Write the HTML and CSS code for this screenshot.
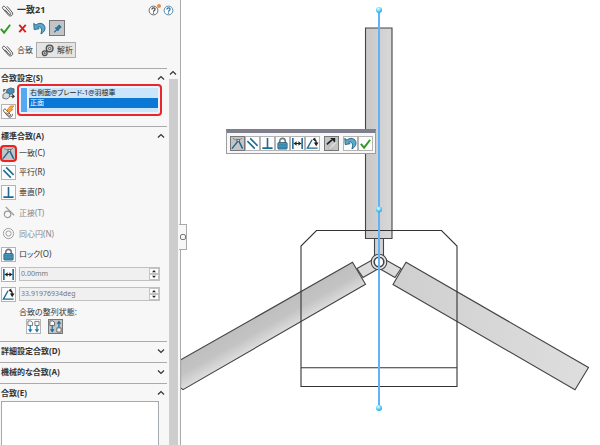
FILE: index.html
```html
<!DOCTYPE html>
<html lang="ja">
<head>
<meta charset="utf-8">
<title>一致21</title>
<link rel="stylesheet" href="styles.css">
</head>
<body>
<svg class="defs" aria-hidden="true">
  <defs>
    <symbol id="clip" viewBox="0 0 14 14"><path d="M4.500 6.500l4.200 4.600c1 1 2.400-.2 1.500-1.300L4.300 3C2.800 1.400.6 3.300 2 5l6 7c2.300 2.500 6-.6 4-3.200L6.800 2.800" fill="none" stroke="#4a4a4a" stroke-width="1" stroke-linecap="round"/></symbol>
    <symbol id="check" viewBox="0 0 14 14"><path d="M2 7.500l3.500 4L12 3" fill="none" stroke="#2c9a1c" stroke-width="2"/></symbol>
    <symbol id="cross" viewBox="0 0 14 14"><path d="M3.500 3l7 8M10.500 3l-7 8" fill="none" stroke="#e01c1c" stroke-width="2"/></symbol>
    <symbol id="undo" viewBox="0 0 14 14"><path d="M.8 1.500l.5 6.700 5.400-1L5 5.700C8 4.300 10.500 7 8.500 12.800 13.500 10.500 14.300 4.800 10.800 2.400 8.500.9 5.500 1.200 3.300 3.300z" fill="#5aaacb" stroke="#1d5878" stroke-width=".9"/></symbol>
    <symbol id="pin" viewBox="0 0 14 14"><path d="M3.500 11L6 8.500M4.500 6l3.500 3.500M8.200 3.500l2.600 2.600M5.500 7l3.300-3.300 1.700 1.700L7.200 8.700z" fill="#3586ad" stroke="#226f9a" stroke-width="1.300"/></symbol>
    <symbol id="gears" viewBox="0 0 14 14"><g fill="#c8c8c8" stroke="#505050"><circle cx="9.300" cy="4.800" r="3.600" stroke-width="1.500"/><circle cx="9.300" cy="4.800" r="1.200" fill="#eee"/><circle cx="4" cy="10" r="2.600" stroke-width="1.300"/><circle cx="4" cy="10" r=".6"/></g></symbol>
    <symbol id="help" viewBox="0 0 14 14"><circle cx="7" cy="7" r="5.600" fill="#fff" stroke="currentColor" stroke-width="1"/><path d="M5 5.700c0-3 4.200-2.600 4 0C8.900 7 7 7 7 8.500M7 9.600v1.400" fill="none" stroke="currentColor" stroke-width="1.500"/></symbol>
    <symbol id="entity" viewBox="0 0 14 14"><g stroke="#35434a" stroke-width=".7"><path d="M5 3l4-2 4 1v4l-4 2-4-1z" fill="#3e91b8"/><path d="M1 8l3-2 4 1v4l-3 2-4-1z" fill="#d5dde0"/></g><path d="M9 10h4l-2-2m2 2l-2 2M2 5V3h2" fill="none" stroke="#333" stroke-width="1.200"/></symbol>
    <symbol id="multi" viewBox="0 0 14 14"><path d="M4.500 8l3 3.500c1 1 2.400-.2 1.500-1.300L4.300 5C2.800 3.400.6 5.300 2 7l4.500 5.300c2 2 5.500 0 4.500-2.800" fill="none" stroke="#4a4a4a"/><path d="M9 1L5 6h3L6 10l6-5.500H9.500L13 1z" fill="#fbb03b" stroke="#d86b12" stroke-width=".7"/></symbol>
    <symbol id="coincident" viewBox="0 0 14 14"><path d="M1 12.500L7.500 4.500M8.500 4.500l4 8" fill="none" stroke="#1e6288" stroke-width="1.500"/><path d="M2 1.500l4.500 2M9 3.500L12 1" fill="none" stroke="#7c8488" stroke-width="1"/><rect x="6.500" y="2.500" width="2.500" height="2.500" fill="#ddd" stroke="#4c5558" stroke-width=".8"/></symbol>
    <symbol id="parallel" viewBox="0 0 14 14"><path d="M1.500 4.500l8 8M4.500 1.500l8 8" fill="none" stroke="#1e6a94" stroke-width="1.700"/></symbol>
    <symbol id="perp" viewBox="0 0 14 14"><path d="M7 1v11M1.500 12h11" fill="none" stroke="#1e6a94" stroke-width="1.700"/></symbol>
    <symbol id="tangent" viewBox="0 0 14 14"><circle cx="6" cy="9" r="3.500" fill="none" stroke="#999" stroke-width="1.300"/><path d="M4 1l9 9" stroke="#999" stroke-width="1.300"/></symbol>
    <symbol id="concentric" viewBox="0 0 14 14"><g fill="none" stroke="#999"><circle cx="7" cy="7" r="5.500"/><circle cx="7" cy="7" r="2.800"/></g></symbol>
    <symbol id="lock" viewBox="0 0 14 14"><path d="M4 7V4.500c0-4 6-4 6 0V7" fill="none" stroke="#717a7e" stroke-width="1.700"/><rect x="2" y="6" width="10" height="7" rx="1" fill="#4a9dc2" stroke="#1f4d63" stroke-width=".8"/><path d="M3 8.500h8M3 11h8" stroke="#2b6f90" stroke-width=".8"/></symbol>
    <symbol id="distance" viewBox="0 0 14 14"><path d="M2 1v12M12 1v12" stroke="#1e6a94" stroke-width="1.700"/><path d="M3 7h8" stroke="#222" stroke-width="1.200"/><path d="M3 7l3-2.500v5zM11 7L8 4.500v5z" fill="#222"/></symbol>
    <symbol id="angle" viewBox="0 0 14 14"><path d="M6.500 3L1.500 12h11" fill="none" stroke="#1e6a94" stroke-width="1.500"/><path d="M8 2.500c2.500 0 3 2 3 4" fill="none" stroke="#222" stroke-width="1.500"/><path d="M8.500 6h5L11 10zM7 2.500L10 .5v4z" fill="#222"/></symbol>
    <symbol id="aligned" viewBox="0 0 14 14"><path d="M1 1h3l2 1.500V6H1zM8.500 1.500H13V6H8.500z" fill="#f8f8f8" stroke="#666" stroke-width=".9"/><path d="M3.500 6v6M10.700 6v6" stroke="#1e7db0" stroke-width="1.300"/><path d="M1 10h5l-2.500 3.500zM8.200 10h5l-2.500 3.500z" fill="#1e7db0"/></symbol>
    <symbol id="anti" viewBox="0 0 14 14"><path d="M1 1h3l2 1.500V6H1zM8.500 8.500H13V13H8.500z" fill="#f8f8f8" stroke="#555" stroke-width=".9"/><path d="M3.500 6v6M10.700 3v5" stroke="#1e6f9c" stroke-width="1.300"/><path d="M1 10h5l-2.500 3.500zM8.200 4h5L10.700.5z" fill="#1e6f9c"/></symbol>
    <symbol id="flip" viewBox="0 0 14 14"><path d="M2 8L7.500 3" stroke="#222" stroke-width="1.800"/><path d="M5.500 1H11v5.500z" fill="#222"/><path d="M12 5.500L6.500 11" stroke="#e4e4e4" stroke-width="1.300"/><path d="M4.500 9v4h4z" fill="#e4e4e4" stroke="#888" stroke-width=".4"/></symbol>
    <symbol id="up" viewBox="0 0 8 8"><path d="M1 5.500l3-3 3 3" fill="none" stroke="#333" stroke-width="1.200"/></symbol>
    <symbol id="down" viewBox="0 0 8 8"><path d="M1 2.500l3 3 3-3" fill="none" stroke="#333" stroke-width="1.200"/></symbol>
    <symbol id="tri-up" viewBox="0 0 8 4"><path d="M2 3.200h4L4 1z" fill="#222"/></symbol>
    <symbol id="tri-down" viewBox="0 0 8 4"><path d="M2 .8h4L4 3z" fill="#222"/></symbol>
  </defs>
</svg>

<aside class="panel">
  <div class="scroll-area">
    <header class="head">
      <div class="title-row">
        <svg class="icon"><use href="#clip"/></svg>
        <h1>一致21</h1>
        <button class="plain help new" aria-label="新機能"><svg class="icon-s"><use href="#help"/></svg></button>
        <button class="plain help" aria-label="ヘルプ"><svg class="icon-s"><use href="#help"/></svg></button>
      </div>
      <div class="actions">
        <button class="plain" aria-label="OK"><svg class="icon"><use href="#check"/></svg></button>
        <button class="plain" aria-label="キャンセル"><svg class="icon"><use href="#cross"/></svg></button>
        <button class="plain" aria-label="元に戻す"><svg class="icon"><use href="#undo"/></svg></button>
        <button class="tool on" aria-label="表示を保持"><svg class="icon"><use href="#pin"/></svg></button>
      </div>
      <nav class="tabs">
        <button class="tab current"><svg class="icon"><use href="#clip"/></svg>合致</button>
        <button class="tab"><svg class="icon"><use href="#gears"/></svg>解析</button>
      </nav>
    </header>

    <section class="group selections">
      <button class="group-head">合致設定(S)<svg class="chev"><use href="#up"/></svg></button>
      <div class="select-row">
        <div class="select-tools">
          <button class="plain" aria-label="合致エンティティ"><svg class="icon"><use href="#entity"/></svg></button>
          <button class="tool" aria-label="複数合致"><svg class="icon"><use href="#multi"/></svg></button>
        </div>
        <div class="picker">
          <ul class="picked">
            <li>右側面@ブレード-1@羽根車</li>
            <li class="chosen">正面</li>
          </ul>
        </div>
      </div>
    </section>

    <section class="group">
      <button class="group-head">標準合致(A)<svg class="chev"><use href="#up"/></svg></button>
      <div class="mate"><button class="tool on marked" id="m1"><svg class="icon"><use href="#coincident"/></svg></button><label for="m1">一致(C)</label></div>
      <div class="mate"><button class="tool" id="m2"><svg class="icon"><use href="#parallel"/></svg></button><label for="m2">平行(R)</label></div>
      <div class="mate"><button class="tool" id="m3"><svg class="icon"><use href="#perp"/></svg></button><label for="m3">垂直(P)</label></div>
      <div class="mate off"><button class="plain" id="m4" disabled><svg class="icon"><use href="#tangent"/></svg></button><label for="m4">正接(T)</label></div>
      <div class="mate off"><button class="plain" id="m5" disabled><svg class="icon"><use href="#concentric"/></svg></button><label for="m5">同心円(N)</label></div>
      <div class="mate"><button class="tool" id="m6"><svg class="icon"><use href="#lock"/></svg></button><label for="m6">ロック(O)</label></div>
      <div class="mate">
        <button class="tool" aria-label="距離"><svg class="icon"><use href="#distance"/></svg></button>
        <div class="spin"><input type="text" value="0.00mm" aria-label="距離"><div class="steps"><button aria-label="増"><svg><use href="#tri-up"/></svg></button><button aria-label="減"><svg><use href="#tri-down"/></svg></button></div></div>
      </div>
      <div class="mate">
        <button class="tool" aria-label="角度"><svg class="icon"><use href="#angle"/></svg></button>
        <div class="spin"><input type="text" value="33.91976934deg" aria-label="角度"><div class="steps"><button aria-label="増"><svg><use href="#tri-up"/></svg></button><button aria-label="減"><svg><use href="#tri-down"/></svg></button></div></div>
      </div>
      <div class="align">
        <p>合致の整列状態:</p>
        <div class="align-tools">
          <button class="tool" aria-label="同じ向き"><svg class="icon"><use href="#aligned"/></svg></button>
          <button class="tool on" aria-label="逆向き"><svg class="icon"><use href="#anti"/></svg></button>
        </div>
      </div>
    </section>

    <section class="group"><button class="group-head">詳細設定合致(D)<svg class="chev"><use href="#down"/></svg></button></section>
    <section class="group"><button class="group-head">機械的な合致(A)<svg class="chev"><use href="#down"/></svg></button></section>
    <section class="group last">
      <button class="group-head">合致(E)<svg class="chev"><use href="#up"/></svg></button>
      <ul class="mate-list"></ul>
    </section>
  </div>
  <div class="scrollbar"><svg class="chev"><use href="#up"/></svg><div class="thumb"></div></div>
  <button class="handle" aria-label="パネルを閉じる"></button>
</aside>

<main class="view">
  <svg class="model" viewBox="181 0 419 445" preserveAspectRatio="xMinYMin meet">
    <defs>
      <linearGradient id="gTop" x1="0" x2="1"><stop offset="0" stop-color="#c8c8c8"/><stop offset="1" stop-color="#d8d8d8"/></linearGradient>
      <linearGradient id="gLeft" gradientUnits="userSpaceOnUse" x1="262" y1="305" x2="279" y2="335"><stop offset="0" stop-color="#bdbdbd"/><stop offset=".6" stop-color="#c3c3c3"/><stop offset="1" stop-color="#dedede"/></linearGradient>
      <linearGradient id="gRight" x1="0" x2="1"><stop offset="0" stop-color="#cfcfcf"/><stop offset="1" stop-color="#dedede"/></linearGradient>
      <radialGradient id="ball" cx=".4" cy=".3" r=".7"><stop offset="0" stop-color="#e8ffff"/><stop offset=".5" stop-color="#6fd8f8"/><stop offset="1" stop-color="#2aa4e6"/></radialGradient>
    </defs>
    <g stroke="#444" stroke-width="1.100">
      <path d="M374.500 238h9v20h-9z" fill="#d2d2d2"/>
      <path d="M357 268.500l16-9 4 10-14 8zM401 268.500l-16-9-4 10 14 8z" fill="#dcdcdc"/>
      <path d="M365.500 28h26.500v210.500h-26.500z" fill="url(#gTop)"/>
      <path d="M352.500 262.300l13 22L183 389.700l-2.500-2V360z" fill="url(#gLeft)"/>
      <path d="M406 262.300L588.500 367.500l-13.500 22.200L393 284.500z" fill="url(#gRight)"/>
      <path d="M301 386.500V246l15.500-15.500h125L457 246v140.500zM301 367.800h156" fill="none" stroke="#333"/>
      <circle cx="379" cy="262" r="7.800" fill="#e8e8e8"/>
      <circle cx="379" cy="262" r="4.800" fill="#fff" stroke-width="1.600"/>
    </g>
    <path d="M379 10v398" stroke="#65b0fa" stroke-width="2"/>
    <g fill="url(#ball)"><circle cx="379" cy="10" r="3"/><circle cx="379" cy="209.500" r="3"/><circle cx="379" cy="408" r="3"/></g>
  </svg>
  <div class="floating">
    <div class="buttons">
      <button class="tool on" aria-label="一致"><svg class="icon"><use href="#coincident"/></svg></button>
      <button class="tool" aria-label="平行"><svg class="icon"><use href="#parallel"/></svg></button>
      <button class="tool" aria-label="垂直"><svg class="icon"><use href="#perp"/></svg></button>
      <button class="tool" aria-label="ロック"><svg class="icon"><use href="#lock"/></svg></button>
      <button class="tool" aria-label="距離"><svg class="icon"><use href="#distance"/></svg></button>
      <button class="tool" aria-label="角度"><svg class="icon"><use href="#angle"/></svg></button>
      <button class="tool on apart" aria-label="整列を反転"><svg class="icon"><use href="#flip"/></svg></button>
      <button class="tool apart" aria-label="元に戻す"><svg class="icon"><use href="#undo"/></svg></button>
      <button class="tool" aria-label="OK"><svg class="icon"><use href="#check"/></svg></button>
    </div>
  </div>
</main>
</body>
</html>
```
FILE: styles.css
```css
* { box-sizing: border-box; }

body {
  margin: 0;
  display: flex;
  height: 100vh;
  overflow: hidden;
  background: #fff;
  color: #333;
  font: 8px/10px "Noto Sans", "Noto Sans CJK JP", sans-serif;
  font-feature-settings: "palt";
}

button, input { font: inherit; font-feature-settings: inherit; color: inherit; }
button { padding: 0; border: 0; background: none; }
h1, p, ul { margin: 0; padding: 0; }
ul { list-style: none; }
svg { display: block; }

.defs { position: absolute; width: 0; height: 0; }
.icon { width: 13px; height: 13px; flex: none; }
.icon-s { width: 11px; height: 11px; }
.chev { width: 8px; height: 8px; flex: none; }

.plain, .tool {
  width: 15px;
  height: 15px;
  flex: none;
  display: flex;
  align-items: center;
  justify-content: center;
}
.tool { border: 1px solid #b4b4b4; background: #fdfdfd; }
.tool.on { background: #c2c4c6; border-color: #777; }
.tool.marked { outline: 2px solid #ee2020; outline-offset: -1px; border-radius: 3px; }

.panel {
  position: relative;
  flex: none;
  display: flex;
  width: 181px;
  background: #f7f7f7;
  border-right: 1px solid #aaa;
}
.scroll-area { flex: 1; display: flex; flex-direction: column; min-width: 0; }

.head { height: 68px; }
.title-row { display: flex; align-items: center; height: 20px; padding-left: 1px; }
.title-row h1 { flex: 1; padding-left: 3px; font-size: 9px; }
.help { color: #2b6f96; }
.help.new { position: relative; color: #444; }
.help.new::after {
  content: "";
  position: absolute;
  top: 1px;
  right: 0;
  width: 4px;
  height: 4px;
  border-radius: 2px;
  background: #ef8b3a;
}
.help + .help { margin-right: -7px; }

.actions { display: flex; align-items: center; gap: 2px; height: 16px; margin-left: -2px; }
.actions .tool { width: 16px; height: 16px; }

.tabs { display: flex; margin-top: 6px; }
.tab {
  display: flex;
  align-items: center;
  gap: 3px;
  width: 40px;
  height: 16px;
  padding-left: 4px;
  border: 1px solid #aaa;
  background: #e4e4e4;
}
.tab.current { width: 36px; padding-left: 0; background: none; border-color: transparent; }

.group { width: 167px; border-top: 1px solid #aaa; padding: 0 2px 3px 1px; }
.group-head {
  display: flex;
  align-items: center;
  justify-content: space-between;
  width: 100%;
  height: 17px;
  font-weight: bold;
}

.selections { height: 58px; }
.select-row { display: flex; gap: 1px; margin-top: -2px; }
.select-tools { display: flex; flex-direction: column; gap: 3px; padding-top: 2px; }
.picker {
  width: 145px;
  height: 32px;
  padding: 2px;
  border: 2px solid #e8262b;
  border-radius: 4px;
  background: #e8f3fc;
}
.picked { height: 100%; border-left: 6px solid #56a8f2; background: #cbe5fa; font-size: 7px; }
.picked li { padding: 0 1px; line-height: 10px; border-left: 2px solid #e8f3fc; color: #222; }
.picked .chosen { background: #0c78d6; color: #fff; }

.mate { display: flex; align-items: center; gap: 3px; height: 20px; }
.mate:nth-of-type(1) { height: 18px; }
.mate.off { height: 21px; color: #888; }

.spin { display: flex; flex: 1; height: 14px; margin-right: 5px; border: 1px solid #c0c0c0; background: #f0f0f0; }
.spin input { flex: 1; min-width: 0; padding: 0 0 0 1px; border: 0; background: none; color: #777; font-size: 7px; }
.steps { display: flex; flex-direction: column; width: 10px; }
.steps button { flex: 1; border: 1px solid #c4c4c4; background: #fff; }
.steps svg { width: 8px; height: 4px; }

.align { padding: 2px 0 4px 18px; }
.align p { line-height: 12px; }
.align-tools { display: flex; gap: 7px; padding: 1px 0 0 7px; }

.last { flex: 1; display: flex; flex-direction: column; padding-bottom: 0; }
.mate-list { flex: 1; margin-right: 6px; border: 1px solid #a4a9ae; border-bottom: 0; background: #fff; }

.scrollbar { display: flex; flex-direction: column; width: 9px; margin: 69px 2px 0 0; }
.thumb { flex: 1; margin-top: 2px; background: #cdcdcd; }

.handle {
  position: absolute;
  top: 224px;
  right: -7px;
  z-index: 1;
  width: 8px;
  height: 26px;
  display: grid;
  place-items: center;
  border: 1px solid #aaa;
  border-left: 0;
  background: #f7f7f7;
}
.handle::before { content: ""; width: 4px; height: 4px; border: 1px solid #777; border-radius: 2px; }

.view { position: relative; flex: 1; min-width: 0; }
.model { width: 100%; height: 100%; }
.floating {
  position: absolute;
  top: 129px;
  left: 45px;
  border: 1px solid #9c9ca4;
  border-top: 4px solid #7e7e8c;
  background: #f7f7f7;
}
.buttons { display: flex; padding: 3px 2px 2px 3px; }
.buttons .apart { margin-left: 4px; }
```
